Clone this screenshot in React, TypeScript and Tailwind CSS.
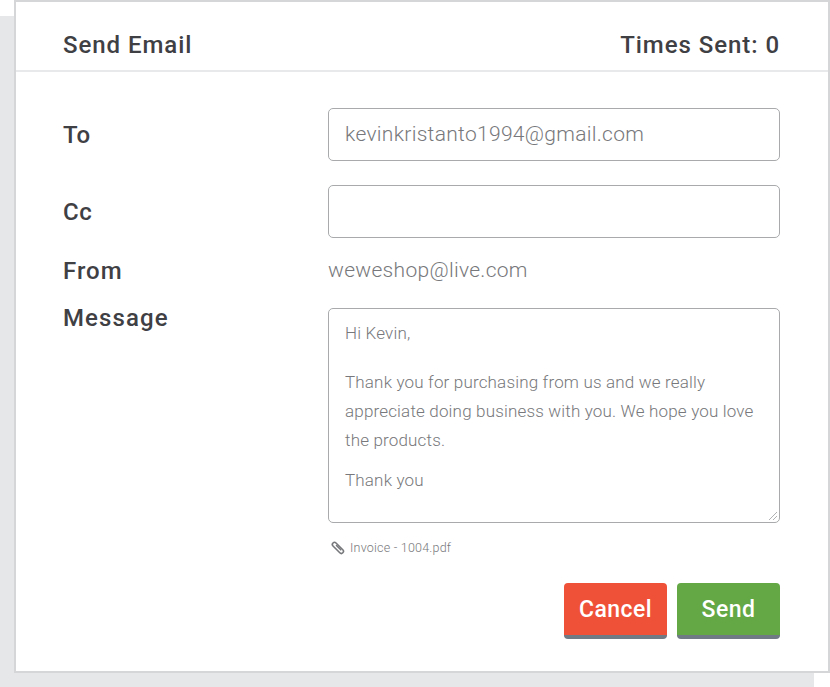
const App: React.FC = () => {
  return (
    <div className="h-[687px] w-[830px] overflow-hidden bg-white font-['Roboto',sans-serif]">
      <div className="ml-[14px] flex h-[673px] w-[816px] flex-col border-2 border-[#d5d6d8] bg-white shadow-[-15px_15px_0_-1px_#e6e7e9]">
        {/* Header */}
        <div className="flex h-[70px] shrink-0 items-center justify-between border-b-2 border-[#e8e9ea] pl-[47px] pr-[48px] pt-[17px] text-[24px] font-medium tracking-[0.95px] text-[#3f4044]">
          <span>Send Email</span>
          <span>Times Sent: 0</span>
        </div>

        {/* Form */}
        <div className="flex flex-col pl-[47px] pr-[48px] pt-[36px]">
          <div className="flex items-center">
            <label className="w-[265px] shrink-0 text-[24px] font-medium tracking-[0.6px] text-[#3f4044]">To</label>
            <div className="flex h-[53px] w-[452px] items-center rounded-[5px] border border-[#a9aaac] px-[16px] text-[21px] font-light tracking-[0.3px] text-[#77787b]">
              kevinkristanto1994@gmail.com
            </div>
          </div>
          <div className="mt-[24px] flex items-center">
            <label className="w-[265px] shrink-0 text-[24px] font-medium tracking-[0.6px] text-[#3f4044]">Cc</label>
            <div className="h-[53px] w-[452px] rounded-[5px] border border-[#a9aaac]"></div>
          </div>
          <div className="mt-[15px] flex items-center">
            <label className="w-[265px] shrink-0 text-[24px] font-medium tracking-[1px] text-[#3f4044]">From</label>
            <span className="text-[21px] font-light tracking-[0.3px] text-[#77787b]">weweshop@live.com</span>
          </div>
          <div className="mt-[11px] flex items-start">
            <label className="w-[265px] shrink-0 text-[24px] font-medium tracking-[1.1px] text-[#3f4044]">Message</label>
            <div className="flex flex-col">
              <div className="relative mt-[8px] h-[215px] w-[452px] rounded-[5px] border border-[#a9aaac] px-[16px] pt-[10px] text-[17px] font-light leading-[29px] tracking-[0.17px] text-[#77787b]">
                <p>Hi Kevin,</p>
                <p className="mt-[20px]">
                  Thank you for purchasing from us and we really appreciate doing business with you. We hope you love the products.
                </p>
                <p className="mt-[11px]">Thank you</p>
                <svg className="absolute bottom-[1px] right-[1px]" width="10" height="10" viewBox="0 0 10 10" fill="none" stroke="#b0b1b3" strokeWidth="1">
                  <path d="M9 1 L1 9 M9 5 L5 9" />
                </svg>
              </div>
              <div className="mt-[16px] flex items-center pl-[3px] text-[12.5px] font-light tracking-[0.22px] text-[#77787b]">
                {/* paperclip */}
                <svg className="mr-[5px]" width="14" height="14" viewBox="0 0 14 14" fill="none" stroke="#77787b" strokeWidth="1.6" strokeLinecap="round">
                  <path d="M4.5 7.5 L2 5 A2 2 0 0 1 5 2 L11.8 8.8 A2 2 0 0 1 8.8 11.8 L3.8 6.8" />
                  <path d="M5.5 4.5 L9.8 8.8" />
                </svg>
                <span>Invoice - 1004.pdf</span>
              </div>
              <div className="mt-[25px] flex w-[452px] justify-end gap-[10px]">
                <button className="h-[56px] w-[103px] rounded-[4px] border-b-[4px] border-[#6f7a85] bg-[#ef5138] pt-[3px] text-[23px] font-medium tracking-[0.45px] text-white">
                  Cancel
                </button>
                <button className="h-[56px] w-[103px] rounded-[4px] border-b-[4px] border-[#6f7a85] bg-[#63a845] pt-[3px] text-[23px] font-medium tracking-[0.45px] text-white">
                  Send
                </button>
              </div>
            </div>
          </div>
        </div>
      </div>
    </div>
  );
};

export default App;
